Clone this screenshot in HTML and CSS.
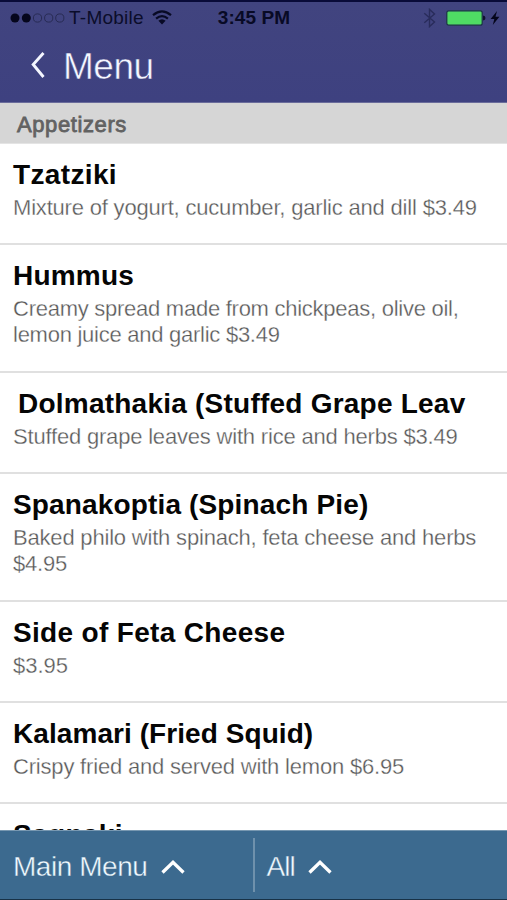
FILE: index.html
```html
<!DOCTYPE html>
<html lang="en">
<head>
<meta charset="utf-8">
<title>Menu</title>
<link rel="stylesheet" href="styles.css">
</head>
<body>
<div class="app">
  <header class="header">
    <div class="status">
      <div class="status-left">
        <svg class="dots" width="56" height="12" viewBox="0 0 56 12"><g fill="#05061c"><circle cx="5" cy="6" r="4.5"/><circle cx="16.3" cy="6" r="4.5"/></g><g fill="none" stroke="#25284f" stroke-width="0.9"><circle cx="27.5" cy="6" r="4.1"/><circle cx="38.7" cy="6" r="4.1"/><circle cx="49.8" cy="6" r="4.1"/></g></svg>
        <span class="carrier">T-Mobile</span>
        <svg class="wifi" width="20" height="15" viewBox="0 0 20 15"><g fill="none" stroke="#080a25" stroke-width="2.2"><path d="M1 5.2Q10-2.4 19 5.2"/><path d="M4.1 8.6Q10 3.6 15.9 8.6"/></g><path d="M6.4 10.8Q10 7.8 13.6 10.8L10 14.4Z" fill="#080a25"/></svg>
      </div>
      <span class="time">3:45 PM</span>
      <div class="status-right">
        <svg width="13" height="20" viewBox="0 0 12 20"><path d="M.8 5.2 11 14 6 18.6V1.4L11 6 .8 14.8" fill="none" stroke="#292c5b" stroke-width="1.4"/></svg>
        <svg width="40" height="16" viewBox="0 0 40 16"><rect x=".8" y=".8" width="35.4" height="14.4" rx="2" fill="#4fdb64" stroke="#1d3148" stroke-width="1.2"/><path d="M37 5.5q2.5.4 2.5 2.5T37 10.500Z" fill="#10122e"/></svg>
        <svg class="bolt" width="10" height="14" viewBox="0 0 10 14"><path d="M7 0 .6 8H4.300L2.800 14 9.400 5.700H5.500Z" fill="#05061c"/></svg>
      </div>
    </div>
    <div class="nav">
      <svg width="14" height="26" viewBox="0 0 14 26"><path d="M12.500 1 2.200 12.500 12.500 25" fill="none" stroke="#f4f6ff" stroke-width="2.900"/></svg>
      <h1 class="nav-title">Menu</h1>
    </div>
  </header>
  <h2 class="section">Appetizers</h2>
  <main class="list">
    <article class="item"><h3 class="name n1">Tzatziki</h3><p class="desc">Mixture of yogurt, cucumber, garlic and dill $3.49</p></article>
    <article class="item tall"><h3 class="name n2">Hummus</h3><p class="desc d2">Creamy spread made from chickpeas, olive oil,<br>lemon juice and garlic $3.49</p></article>
    <article class="item"><h3 class="name n3">Dolmathakia (Stuffed Grape Leav</h3><p class="desc">Stuffed grape leaves with rice and herbs $3.49</p></article>
    <article class="item tall"><h3 class="name n4">Spanakoptia (Spinach Pie)</h3><p class="desc">Baked philo with spinach, feta cheese and herbs<br>$4.95</p></article>
    <article class="item"><h3 class="name n5">Side of Feta Cheese</h3><p class="desc d5">$3.95</p></article>
    <article class="item"><h3 class="name n6">Kalamari (Fried Squid)</h3><p class="desc">Crispy fried and served with lemon $6.95</p></article>
    <article class="item"><h3 class="name n7">Sagnaki</h3></article>
  </main>
  <footer class="footer">
    <div class="tab"><span class="tab-main">Main Menu</span><svg width="24" height="16" viewBox="0 0 24 16"><path d="M1.500 13.500 12 3.200 22.500 13.500" fill="none" stroke="#fff" stroke-width="3.300"/></svg></div>
    <div class="divider"></div>
    <div class="tab tab-right"><span class="tab-all">All</span><svg width="24" height="16" viewBox="0 0 24 16"><path d="M1.500 13.500 12 3.200 22.500 13.500" fill="none" stroke="#fff" stroke-width="3.300"/></svg></div>
  </footer>
</div>
</body>
</html>
```
FILE: styles.css
```css
* { box-sizing: border-box; }
body { margin: 0; font-family: "Liberation Sans", Arial, sans-serif; background: #fff; }
h1, h2, h3, p { margin: 0; }
svg { display: block; flex: none; }
.app { width: 507px; height: 900px; display: flex; flex-direction: column; overflow: hidden; }

.header { flex: none; height: 103px; background: linear-gradient(#41447f, #3e4180); border-top: 2px solid #090b38; border-bottom: 1px solid #6a6c9b; }
.status { height: 32px; display: grid; grid-template-columns: 1fr auto 1fr; align-items: center; padding: 0 7px 0 10px; }
.status-left { display: flex; align-items: center; }
.carrier { margin-left: 3px; font-size: 19px; line-height: 32px; letter-spacing: 0.25px; color: #0b0d2a; white-space: nowrap; }
.wifi { margin: -2px 0 0 8px; }
.time { margin-left: -2px; font-size: 19px; font-weight: bold; line-height: 32px; letter-spacing: 0.1px; color: #080a25; }
.status-right { display: flex; align-items: center; justify-content: flex-end; gap: 10px; }
.bolt { margin-left: -6px; }
.nav { height: 66px; display: flex; align-items: center; padding: 0 0 4px 31px; }
.nav-title { margin: 4px 0 0 18px; font-size: 37px; line-height: 44px; font-weight: 400; letter-spacing: -0.5px; color: #f4f6ff; -webkit-text-stroke: 0.5px #404381; }

.section { flex: none; height: 41px; padding-left: 17px; background: #d6d6d6; font-size: 22px; font-weight: 400; letter-spacing: 0.6px; line-height: 43px; color: #626262; border-bottom: 1px solid #e4e4e4; -webkit-text-stroke: 0.8px #626262; }

.list { flex: 1; min-height: 0; overflow: hidden; }
.item { height: 101px; padding: 15px 0 0 13px; border-bottom: 2px solid #e0e0e0; }
.tall { height: 128px; }
.name { height: 36px; font-size: 28px; line-height: 32px; color: #050505; white-space: nowrap; }
.desc { font-size: 22px; line-height: 26px; letter-spacing: -0.19px; color: #585858; white-space: nowrap; -webkit-text-stroke: 0.3px #fff; }
.n1, .n7 { letter-spacing: 0.35px; }
.n2 { letter-spacing: 0.2px; }
.n3 { padding-left: 5px; letter-spacing: 0.23px; }
.n4 { letter-spacing: 0.15px; }
.n5 { letter-spacing: 0.33px; }
.n6 { letter-spacing: 0.07px; }
.d2 { letter-spacing: -0.26px; }
.d5 { letter-spacing: 0; }

.footer { flex: none; height: 70px; display: flex; align-items: center; background: #3c6a8f; border-top: 1px solid #7898b1; border-bottom: 1px solid #183247; }
.tab { width: 253px; display: flex; align-items: center; gap: 14px; padding-left: 13px; font-size: 28px; line-height: 40px; color: #f0faff; -webkit-text-stroke: 0.4px #3c6a8f; }
.tab span { margin-top: 4px; }
.tab svg { margin-top: 3px; }
.tab-main { letter-spacing: -0.45px; }
.tab-all { letter-spacing: -0.9px; }
.divider { width: 2px; height: 54px; background: #6f91ac; }
.tab-right { gap: 13px; padding-left: 12px; }
```
